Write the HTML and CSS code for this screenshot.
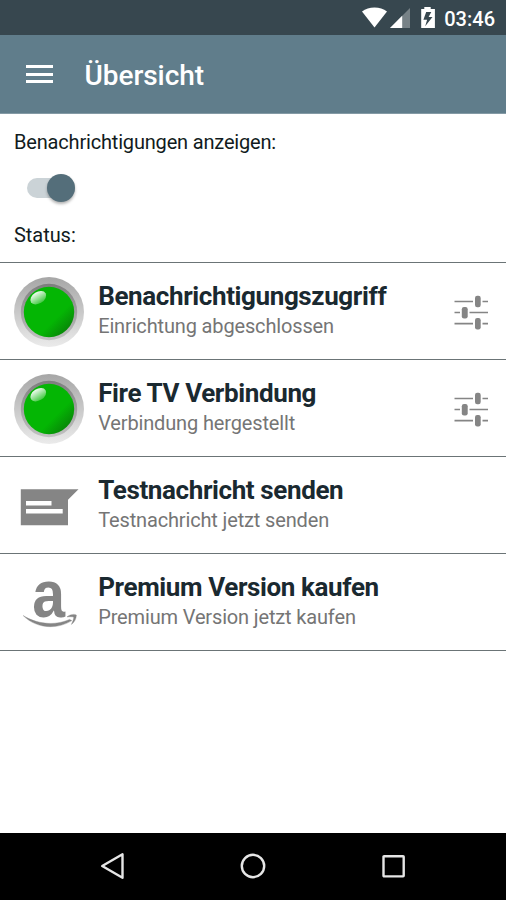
FILE: index.html
```html
<!DOCTYPE html>
<html lang="de">
<head>
<meta charset="utf-8">
<title>Übersicht</title>
<link rel="stylesheet" href="styles.css">
</head>
<body>
<svg class="defs" width="0" height="0" aria-hidden="true">
  <defs>
    <linearGradient id="rim" x1="0" y1="0" x2="0" y2="1"><stop offset="0" stop-color="#a6a6a6"/><stop offset="1" stop-color="#ebebeb"/></linearGradient>
    <linearGradient id="ring" x1="0" y1="0" x2="0" y2="1"><stop offset="0" stop-color="#7d7d7d"/><stop offset="1" stop-color="#c2c2c2"/></linearGradient>
    <linearGradient id="lamp" x1="0.1" y1="0.1" x2="0.86" y2="0.86"><stop offset="0" stop-color="#04b604"/><stop offset=".7" stop-color="#04b604"/><stop offset="1" stop-color="#078807"/></linearGradient>
    <linearGradient id="shine" x1="0" y1="0" x2="0" y2="1"><stop offset="0" stop-color="#fff" stop-opacity=".95"/><stop offset="1" stop-color="#fff" stop-opacity=".25"/></linearGradient>
    <symbol id="led" viewBox="0 0 70 70">
      <circle cx="35" cy="35" r="35" fill="url(#rim)"/>
      <circle cx="35" cy="35" r="28.2" fill="url(#ring)"/>
      <circle cx="35" cy="35" r="25.2" fill="url(#lamp)"/>
      <ellipse cx="24.3" cy="20.7" rx="8.6" ry="5.8" transform="rotate(-32 24.3 20.7)" fill="url(#shine)"/>
    </symbol>
    <symbol id="tune" viewBox="0 0 36 36">
      <path d="M.5 7.500h18.500M28.500 7.500h5.500M.5 18.500h5.500M15.500 18.500h18.500M.5 29.700h18.500M28.500 29.700h5.500" stroke="#858585" stroke-width="1.700"/>
      <rect x="21" y="1.800" width="5.700" height="11.400" rx="2.200"/>
      <rect x="7.800" y="13" width="5.900" height="11.400" rx="2.200"/>
      <rect x="21" y="24.100" width="5.700" height="11.400" rx="2.200"/>
    </symbol>
  </defs>
</svg>

<div class="screen">
  <div class="statusbar">
    <svg class="signals" width="76" height="24" viewBox="0 0 76 24">
      <path d="M0 5.600Q5.300 1.400 12.500 1.400T25 5.600L12.500 21.400Z" fill="#fff"/>
      <path d="M48 2v20H28Z" fill="#fff" opacity=".32"/>
      <path d="M40.200 9.800V22H28Z" fill="#fff"/>
      <path fill-rule="evenodd" d="M62.300 1h6.400v2h4.200v18.900H59.200V3h3.100ZM64.200 6l-2.800 7.800h3.700l-1.900 6.400 7.300-9.200h-3.900l2.700-5Z" fill="#fff"/>
    </svg>
    <span class="clock">03:46</span>
  </div>

  <header class="toolbar">
    <div class="menu"><i></i><i></i><i></i></div>
    <h1>Übersicht</h1>
  </header>

  <main>
    <p class="label">Benachrichtigungen anzeigen:</p>
    <div class="switch"><span class="thumb"></span></div>
    <p class="label status">Status:</p>

    <ul class="list">
      <li>
        <svg class="lead" width="70" height="70"><use href="#led"/></svg>
        <div class="text"><h2>Benachrichtigungszugriff</h2><p>Einrichtung abgeschlossen</p></div>
        <svg class="tune" width="36" height="36"><use href="#tune"/></svg>
      </li>
      <li>
        <svg class="lead" width="70" height="70"><use href="#led"/></svg>
        <div class="text"><h2>Fire TV Verbindung</h2><p>Verbindung hergestellt</p></div>
        <svg class="tune" width="36" height="36"><use href="#tune"/></svg>
      </li>
      <li>
        <svg class="lead" width="70" height="70" viewBox="0 0 70 70">
          <path d="M6.800 18.200h57.700L54 28.700v25.500H6.800Z" fill="#858585"/>
          <path d="M12 30h25.500v4.600H12ZM12 38h36.700v4.600H12Z" fill="#fff"/>
        </svg>
        <div class="text"><h2>Testnachricht senden</h2><p>Testnachricht jetzt senden</p></div>
      </li>
      <li>
        <svg class="lead" width="70" height="70" viewBox="0 0 70 70">
          <text class="brand" transform="translate(18.300 49) scale(.88 1)">a</text>
          <path d="M9.200 47.600C22 55.600 40 58.500 55.500 51.400L57.800 52.600C43 61.800 22.500 60.800 9.200 47.600ZM53 48.900c3.500-2.800 7.500-3 9.400-1.900-.2 3.800-1.900 7.300-5 9.400 1.400-2.800 2.500-5.700 2.300-7.300-1.700-.6-4.200-.4-6.700-.2Z" fill="#858585" stroke="#858585" stroke-width=".4"/>
        </svg>
        <div class="text"><h2>Premium Version kaufen</h2><p>Premium Version jetzt kaufen</p></div>
      </li>
    </ul>
  </main>

  <nav class="navbar">
    <svg width="28" height="28" viewBox="0 0 28 28"><path d="M3.200 14 23.500 2.300v23.400Z"/></svg>
    <svg width="28" height="28" viewBox="0 0 28 28"><circle cx="14" cy="14" r="11.200"/></svg>
    <svg width="28" height="28" viewBox="0 0 28 28"><rect x="4.500" y="4.200" width="20.200" height="20.200" rx=".6"/></svg>
  </nav>
</div>
</body>
</html>
```
FILE: styles.css
```css
* { box-sizing: border-box; }
body, h1, h2, p, ul { margin: 0; padding: 0; }
body { font-family: Roboto, "Liberation Sans", sans-serif; background: #fff; color: #1b2226; }
.defs { display: block; }
.screen { width: 506px; height: 900px; display: flex; flex-direction: column; overflow: hidden; }
.statusbar { height: 35px; flex: none; background: #37474f; display: flex; align-items: center; justify-content: flex-end; padding-right: 11px; gap: 6px; }
.signals { display: block; margin-top: 1px; }
.clock { color: #fff; font-size: 20px; font-weight: 500; line-height: 24px; padding-top: 3px; }
.toolbar { height: 79px; flex: none; background: #607d8b; border-bottom: 1px solid #849aa5; display: flex; align-items: center; padding: 1px 26px 0; }
.menu { width: 27px; display: flex; flex-direction: column; gap: 4.500px; margin: -1px 31.500px 0 0; }
.menu i { height: 3px; background: #fff; }
.toolbar h1 { color: #fff; font-size: 28px; font-weight: 500; line-height: 34px; padding-top: 2px; letter-spacing: -.05px; }
main { flex: 1; }
.label { font-size: 20px; line-height: 24px; letter-spacing: -.18px; padding: 16px 14px 0; color: #111b20; }
.switch { width: 48px; height: 20px; border-radius: 10px; background: #cbd3d7; margin: 24px 0 0 27px; display: flex; align-items: center; justify-content: flex-end; }
.thumb { width: 28px; height: 28px; flex: none; border-radius: 50%; background: #546e7a; box-shadow: 0 2px 3px rgba(0,0,0,.3); }
.status { padding-top: 25px; letter-spacing: -.05px; }
.list { list-style: none; margin-top: 15px; border-top: 1px solid #6b7476; }
.list li { height: 97px; border-bottom: 1px solid #6b7476; display: flex; align-items: center; padding: 0 16px 0 14px; }
.lead { flex: none; margin-top: 2px; margin-right: 14.200px; overflow: visible; }
.text { flex: 1; padding-bottom: 4px; }
.text h2 { font-size: 26px; line-height: 30px; font-weight: 700; letter-spacing: -.38px; color: #1a2930; white-space: nowrap; }
.text p { font-size: 20px; line-height: 24px; letter-spacing: -.15px; color: #757575; margin-top: 3px; white-space: nowrap; }
.tune { fill: #858585; flex: none; margin-top: 1px; }
.brand { font: 700 67px "Liberation Sans", sans-serif; fill: #858585; }
.navbar { height: 67px; flex: none; background: #000; display: flex; justify-content: space-between; padding: 19px 99px 0 99px; }
.navbar svg { fill: none; stroke: #e6e6e6; stroke-width: 2.400px; stroke-linejoin: round; }
```
